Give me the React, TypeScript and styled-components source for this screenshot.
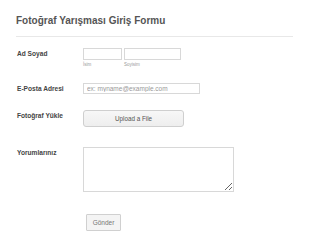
import React from 'react';
import styled, { createGlobalStyle } from 'styled-components';

const GlobalStyle = createGlobalStyle`
  html, body {
    margin: 0;
    padding: 0;
    background: #ffffff;
    font-family: "Liberation Sans", Arial, sans-serif;
  }
`;

const Page = styled.div`
  width: 310px;
  height: 247px;
  padding: 15px 17px 0 16px;
  box-sizing: border-box;
  overflow: hidden;
`;

const Title = styled.h1`
  margin: 0;
  font-size: 10px;
  line-height: 12px;
  font-weight: bold;
  color: #555;
`;

const Divider = styled.div`
  margin-top: 9px;
  height: 1px;
  background: #e8e8e8;
`;

const Row = styled.div<{ $top: number }>`
  display: grid;
  grid-template-columns: 67px 1fr;
  align-items: start;
  margin-top: ${p => p.$top}px;
`;

const Label = styled.label`
  padding-left: 1px;
  padding-top: 1px;
  font-size: 6.6px;
  line-height: 9px;
  font-weight: bold;
  color: #444;
`;

const Control = styled.div<{ $indent?: number }>`
  display: flex;
  gap: 2px;
  padding-left: ${p => p.$indent ?? 0}px;
  line-height: 0;
`;

const Field = styled.div`
  display: flex;
  flex-direction: column;
`;

const TextBox = styled.input<{ $w: number; $h: number }>`
  display: block;
  box-sizing: border-box;
  width: ${p => p.$w}px;
  height: ${p => p.$h}px;
  margin: 0;
  padding: 0 3px;
  border: 1px solid #d8d8d8;
  background: #fff;
  font-family: "Liberation Sans", Arial, sans-serif;
  font-size: 6.5px;
  color: #444;
  outline: none;

  &::placeholder {
    color: #999;
  }
`;

const SubLabel = styled.span`
  margin-top: 2px;
  font-size: 4.5px;
  line-height: 6px;
  color: #999;
`;

const UploadButton = styled.button`
  display: block;
  box-sizing: border-box;
  width: 101px;
  height: 17px;
  margin: 0;
  padding: 0;
  border: 1px solid #cfcfcf;
  border-radius: 3px;
  background: linear-gradient(#f7f7f7, #eeeeee);
  font-family: "Liberation Sans", Arial, sans-serif;
  font-size: 6.3px;
  line-height: 15px;
  color: #555;
`;

const Comments = styled.textarea`
  display: block;
  box-sizing: border-box;
  width: 151px;
  height: 45px;
  margin: 0;
  padding: 2px;
  border: 1px solid #d8d8d8;
  background: #fff;
  font-family: "Liberation Sans", Arial, sans-serif;
  font-size: 6.5px;
  resize: both;
  outline: none;
`;

const Submit = styled.button`
  display: block;
  box-sizing: border-box;
  width: 35px;
  height: 17px;
  margin: 0;
  padding: 0;
  border: 1px solid #d0d0d0;
  border-radius: 1px;
  background: #f4f4f4;
  font-family: "Liberation Sans", Arial, sans-serif;
  font-size: 6.5px;
  line-height: 15px;
  color: #777;
`;

export default function App() {
  return (
    <>
      <GlobalStyle />
      <Page>
        <Title>Fotoğraf Yarışması Giriş Formu</Title>
        <Divider />

        <Row $top={11}>
          <Label>Ad Soyad</Label>
          <Control>
            <Field>
              <TextBox $w={39} $h={12} />
              <SubLabel>İsim</SubLabel>
            </Field>
            <Field>
              <TextBox $w={57} $h={12} />
              <SubLabel>Soyisim</SubLabel>
            </Field>
          </Control>
        </Row>

        <Row $top={15}>
          <Label>E-Posta Adresi</Label>
          <Control>
            <TextBox $w={117} $h={11} placeholder="ex: myname@example.com" />
          </Control>
        </Row>

        <Row $top={16}>
          <Label>Fotoğraf Yükle</Label>
          <Control>
            <UploadButton type="button">Upload a File</UploadButton>
          </Control>
        </Row>

        <Row $top={20}>
          <Label>Yorumlarınız</Label>
          <Control>
            <Comments />
          </Control>
        </Row>

        <Row $top={22}>
          <span />
          <Control $indent={3}>
            <Submit type="submit">Gönder</Submit>
          </Control>
        </Row>
      </Page>
    </>
  );
}
